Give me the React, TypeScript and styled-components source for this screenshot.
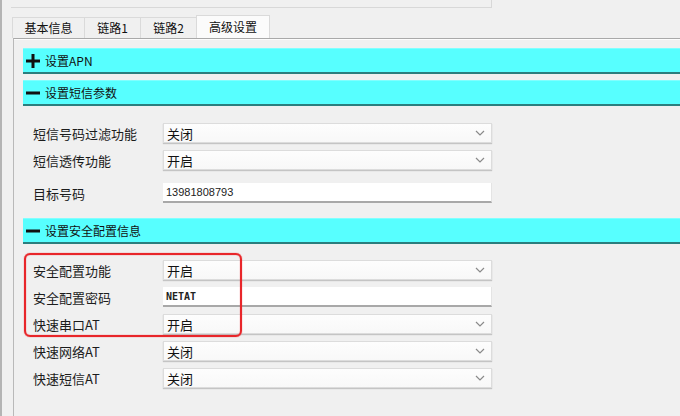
import React from "react";
import styled, { createGlobalStyle } from "styled-components";

const Global = createGlobalStyle`
  html, body { margin: 0; padding: 0; background: #f0f0f0; }
  body { font-family: "Noto Sans CJK SC", "Noto Sans", sans-serif; color: #1a1a1a; }
`;

const Frame = styled.div`
  position: relative;
  width: 680px;
  height: 416px;
  overflow: hidden;
  box-sizing: border-box;
  border-left: 2px solid #b4b4b4;
  background: #f0f0f0;
`;

const TopBox = styled.div`
  margin-left: 9px;
  width: 481px;
  height: 8px;
  box-sizing: border-box;
  border-right: 1px solid #d8d8d8;
  border-bottom: 1px solid #d8d8d8;
`;

const TabBar = styled.div`
  display: flex;
  align-items: flex-end;
  height: 30px;
  padding-left: 11px;
  box-sizing: border-box;
`;

const Tab = styled.div<{ $w: number; $active?: boolean }>`
  width: ${(p) => p.$w}px;
  height: ${(p) => (p.$active ? 23 : 21)}px;
  box-sizing: border-box;
  display: flex;
  align-items: center;
  justify-content: center;
  font-size: 12px;
  line-height: 1;
  color: #111;
  background: ${(p) => (p.$active ? "#fbfbfb" : "#f0f0f0")};
  border: 1px solid #dadada;
  border-bottom: none;
  margin-left: -1px;
`;

const Panel = styled.div`
  position: relative;
  margin-left: 11px;
  height: 378px;
  box-sizing: border-box;
  border-top: 1px solid #a9a9a9;
  border-left: 1px solid #b9b9b9;
  box-shadow: inset 0 1px 0 #fcfcfc;
  padding: 9px 0 0 9px;
`;

const Header = styled.div<{ $mt: number }>`
  display: flex;
  align-items: center;
  gap: 4px;
  height: 26px;
  margin-top: ${(p) => p.$mt}px;
  box-sizing: border-box;
  padding-left: 2px;
  background: #57ffff;
  border-top: 1px solid #80ffff;
  border-bottom: 2px solid #2b7e7e;
  font-size: 12px;
  color: #111;
`;

const Sign = styled.span`
  display: inline-flex;
  width: 16px;
  height: 16px;
  align-items: center;
  justify-content: center;
`;

const Rows = styled.div<{ $mt: number }>`
  display: grid;
  grid-template-columns: 130px 329px;
  row-gap: 7px;
  margin-top: ${(p) => p.$mt}px;
  padding-left: 10px;
`;

const Label = styled.div<{ $mt?: number }>`
  height: 20px;
  display: flex;
  align-items: center;
  font-size: 13px;
  color: #1c1c1c;
  margin-top: ${(p) => p.$mt || 0}px;
`;

const Select = styled.div<{ $mt?: number }>`
  height: 20px;
  box-sizing: border-box;
  display: flex;
  align-items: center;
  justify-content: space-between;
  padding: 0 6px 0 3px;
  background: linear-gradient(#fdfdfd, #f8f8f8);
  border: 1px solid #dcdcdc;
  box-shadow: 0 1px 1px #c4c4c4;
  font-size: 13px;
  color: #111;
  margin-top: ${(p) => p.$mt || 0}px;
`;

const Input = styled.div<{ $mt?: number; $bold?: boolean }>`
  height: 20px;
  box-sizing: border-box;
  display: flex;
  align-items: center;
  padding-left: 3px;
  background: #ffffff;
  border-bottom: 2px solid #a8a8a8;
  border-right: 1px solid #e4e4e4;
  font-family: ${(p) => (p.$bold ? '"DejaVu Sans Mono", monospace' : '"Liberation Sans", sans-serif')};
  font-weight: ${(p) => (p.$bold ? 700 : 400)};
  font-size: ${(p) => (p.$bold ? 10 : 11)}px;
  color: #222;
  margin-top: ${(p) => p.$mt || 0}px;
`;

const Highlight = styled.div`
  position: absolute;
  left: 10px;
  top: 214px;
  width: 218px;
  height: 84px;
  box-sizing: border-box;
  border: 2px solid #e8262a;
  border-radius: 6px;
  box-shadow: 0 0 1px #e8262a, inset 0 0 1px #e8262a;
  pointer-events: none;
`;

const Chevron = () => (
  <svg width="10" height="6" viewBox="0 0 10 6">
    <polyline points="1,1 5,5 9,1" fill="none" stroke="#8a8a8a" strokeWidth="1.2" />
  </svg>
);

const Plus = () => (
  <svg width="16" height="16" viewBox="0 0 16 16">
    <rect x="1" y="6.5" width="14" height="3" fill="#111" />
    <rect x="6.5" y="1" width="3" height="14" fill="#111" />
  </svg>
);

const Minus = () => (
  <svg width="16" height="16" viewBox="0 0 16 16">
    <rect x="1" y="6.5" width="14" height="3" fill="#111" />
  </svg>
);

type Field = { label: string; kind: "select" | "input"; value: string; mt?: number; bold?: boolean };

const FieldRows = ({ fields, mt }: { fields: Field[]; mt: number }) => (
  <Rows $mt={mt}>
    {fields.map((f) => (
      <React.Fragment key={f.label}>
        <Label $mt={f.mt}>{f.label}</Label>
        {f.kind === "select" ? (
          <Select $mt={f.mt}>
            <span>{f.value}</span>
            <Chevron />
          </Select>
        ) : (
          <Input $mt={f.mt} $bold={f.bold}>{f.value}</Input>
        )}
      </React.Fragment>
    ))}
  </Rows>
);

export default function App() {
  return (
    <>
      <Global />
      <Frame>
        <TopBox />
        <TabBar>
          <Tab $w={73}>基本信息</Tab>
          <Tab $w={57}>链路1</Tab>
          <Tab $w={57}>链路2</Tab>
          <Tab $w={74} $active>高级设置</Tab>
        </TabBar>
        <Panel>
          <Header $mt={0}>
            <Sign><Plus /></Sign>设置APN
          </Header>
          <Header $mt={6}>
            <Sign><Minus /></Sign>设置短信参数
          </Header>
          <FieldRows
            mt={17}
            fields={[
              { label: "短信号码过滤功能", kind: "select", value: "关闭" },
              { label: "短信透传功能", kind: "select", value: "开启" },
              { label: "目标号码", kind: "input", value: "13981808793", mt: 6 },
            ]}
          />
          <Header $mt={15}>
            <Sign><Minus /></Sign>设置安全配置信息
          </Header>
          <FieldRows
            mt={16}
            fields={[
              { label: "安全配置功能", kind: "select", value: "开启" },
              { label: "安全配置密码", kind: "input", value: "NETAT", bold: true },
              { label: "快速串口AT", kind: "select", value: "开启" },
              { label: "快速网络AT", kind: "select", value: "关闭" },
              { label: "快速短信AT", kind: "select", value: "关闭" },
            ]}
          />
          <Highlight />
        </Panel>
      </Frame>
    </>
  );
}
